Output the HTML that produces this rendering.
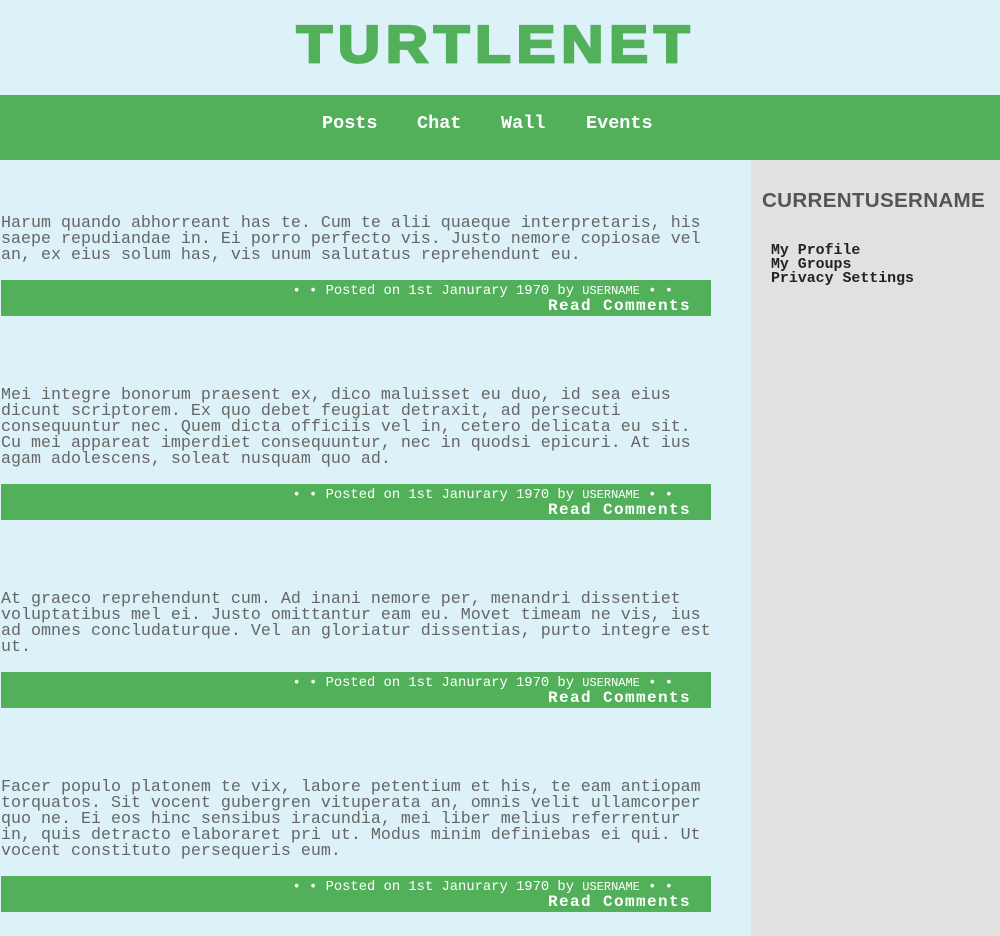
<!DOCTYPE html>
<html><head><meta charset="utf-8"><style>
*{margin:0;padding:0;box-sizing:border-box}
html,body{width:1000px;height:936px;overflow:hidden;background:#ddf1f9}
body{position:relative;font-family:"Liberation Mono",monospace;color:#666}
#hdr{position:absolute;left:0;top:0;width:1000px;height:95px;background:#ddf1f9;text-align:center}
#title{position:absolute;left:296px;top:12px;width:400px;text-align:center;font-family:"Liberation Sans",sans-serif;font-weight:bold;font-size:58px;line-height:66px;letter-spacing:6px;color:#52b05a;text-transform:uppercase;transform:scaleY(0.9);-webkit-text-stroke:3px #52b05a}
#nav{position:absolute;left:0;top:95px;width:1000px;height:65px;background:#52b05a}
#nav span{position:absolute;top:18px;font-weight:bold;font-size:18.5px;color:#fff;line-height:22px}
#side{position:absolute;left:751px;top:160px;width:249px;height:776px;background:#e1e1e1}
#cu{position:absolute;left:11px;top:29px;font-family:"Liberation Sans",sans-serif;font-weight:bold;font-size:20.6px;color:#555;letter-spacing:0.3px}
#links{position:absolute;left:20px;top:84px;font-weight:bold;font-size:14.9px;line-height:14px;color:#222}
.post{position:absolute;left:1px;width:710px}
.txt{font-size:16.67px;line-height:16px;white-space:nowrap;color:#666}
.ft{position:absolute;left:0;width:710px;height:36px;background:#52b05a;color:#fff;text-align:right}
.l1{position:absolute;right:38px;top:3px;font-size:13.8px;line-height:16px;white-space:nowrap}
.l1 small{font-size:12px}
.l2{position:absolute;right:20px;top:17px;font-size:16px;font-weight:bold;line-height:18px;letter-spacing:1.4px}
</style></head><body>
<div id="hdr"><div id="title">Turtlenet</div></div>
<div id="nav"><span style="left:322px">Posts</span><span style="left:417px">Chat</span><span style="left:501px">Wall</span><span style="left:586px">Events</span></div>
<div id="side"><div id="cu">CURRENTUSERNAME</div><div id="links">My Profile<br>My Groups<br>Privacy Settings</div></div>

<div class="post" style="top:216px"><div class="txt">Harum quando abhorreant has te. Cum te alii quaeque interpretaris, his<br>saepe repudiandae in. Ei porro perfecto vis. Justo nemore copiosae vel<br>an, ex eius solum has, vis unum salutatus reprehendunt eu.</div>
<div class="ft" style="top:64px"><div class="l1">• • Posted on 1st Janurary 1970 by <small>USERNAME</small> • •</div><div class="l2">Read Comments</div></div></div>

<div class="post" style="top:388px"><div class="txt">Mei integre bonorum praesent ex, dico maluisset eu duo, id sea eius<br>dicunt scriptorem. Ex quo debet feugiat detraxit, ad persecuti<br>consequuntur nec. Quem dicta officiis vel in, cetero delicata eu sit.<br>Cu mei appareat imperdiet consequuntur, nec in quodsi epicuri. At ius<br>agam adolescens, soleat nusquam quo ad.</div>
<div class="ft" style="top:96px"><div class="l1">• • Posted on 1st Janurary 1970 by <small>USERNAME</small> • •</div><div class="l2">Read Comments</div></div></div>

<div class="post" style="top:592px"><div class="txt">At graeco reprehendunt cum. Ad inani nemore per, menandri dissentiet<br>voluptatibus mel ei. Justo omittantur eam eu. Movet timeam ne vis, ius<br>ad omnes concludaturque. Vel an gloriatur dissentias, purto integre est<br>ut.</div>
<div class="ft" style="top:80px"><div class="l1">• • Posted on 1st Janurary 1970 by <small>USERNAME</small> • •</div><div class="l2">Read Comments</div></div></div>

<div class="post" style="top:780px"><div class="txt">Facer populo platonem te vix, labore petentium et his, te eam antiopam<br>torquatos. Sit vocent gubergren vituperata an, omnis velit ullamcorper<br>quo ne. Ei eos hinc sensibus iracundia, mei liber melius referrentur<br>in, quis detracto elaboraret pri ut. Modus minim definiebas ei qui. Ut<br>vocent constituto persequeris eum.</div>
<div class="ft" style="top:96px"><div class="l1">• • Posted on 1st Janurary 1970 by <small>USERNAME</small> • •</div><div class="l2">Read Comments</div></div></div>
</body></html>
